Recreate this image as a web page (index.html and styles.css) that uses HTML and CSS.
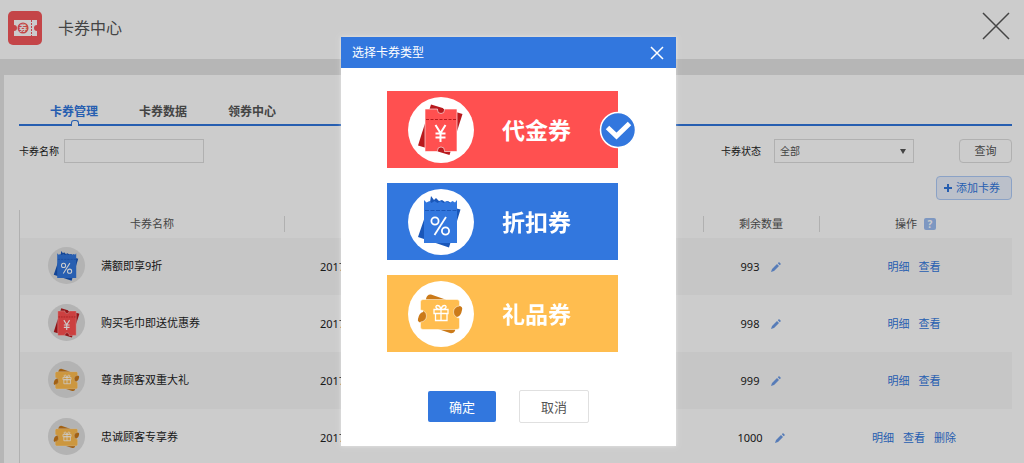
FILE: index.html
```html
<!DOCTYPE html>
<html lang="zh-CN">
<head>
  <meta charset="UTF-8">
  <meta name="viewport" content="width=device-width, initial-scale=1.0">
  <title>卡券中心</title>
  <link rel="stylesheet" href="styles.css">
</head>
<body>
  <svg class="sprite" aria-hidden="true">
    <symbol id="icon-cash" viewBox="0 0 66 66">
      <path fill="#b8191d" d="M23 7.500l31.500 9.500L41.500 58 10 48.500z"/>
      <path fill="#ff5050" stroke="#fff" stroke-width=".6" d="M17 12h12.500v1a3.500 3.500 0 0 0 7 0v-1H49v42.500H36.500v-1a3.500 3.500 0 0 0-7 0v1H17z"/>
      <path fill="#fff" d="M35 10.500l3 1v.500h-2.500z"/>
      <path stroke="#b8191d" stroke-width="1" stroke-dasharray="3 1.500" d="M18 22.500h31"/>
      <path fill="none" stroke="#fff" stroke-width="2" d="M27.500 28l5 8 5-8M32.500 36v9M27.500 36.500h10M27.500 40.500h10"/>
    </symbol>
    <symbol id="icon-discount" viewBox="0 0 66 66">
      <path fill="#1a57b9" d="M22 13l1-6 3 4 2-2 3 3 3-1 3 2 3-1 3 2v4l9.500 2.500L41 58.500 10 48z"/>
      <path fill="#3277de" d="M16 11l2.500 2.500 3-1.500 2 2 3-2 3 2 3-2 3 2 3-2 3 2 3-2 2.500 1.500 2-2.500V54H16z"/>
      <path stroke="#1a57b9" stroke-width="1" stroke-dasharray="4 1.500" d="M17 21.500h32"/>
      <g fill="none" stroke="#fff" stroke-width="1.800">
        <circle cx="27" cy="32" r="3.600"/>
        <circle cx="37.500" cy="42" r="3.600"/>
        <path d="M38 28L26.500 46"/>
      </g>
    </symbol>
    <symbol id="icon-gift" viewBox="0 0 66 66">
      <path fill="#cb7a19" d="M18 18q1-5 5-4.500L36 18l16 7q3 1 2 4-1 6-5 7l-2 14q-2 3-5 2l-12-4-16-6q-5-1-4-4 1-6 5-7z"/>
      <path fill="#ffbd4f" stroke="#fff" stroke-width=".5" d="M15 18.500h34q2.500 0 2.500 2.500v4a6 6 0 0 0 0 12v9q0 2.500-2.500 2.500H15q-2.500 0-2.500-2.500v-5a6 6 0 0 0 0-12v-8q0-2.500 2.500-2.500z"/>
      <path fill="none" stroke="#fff" stroke-width="1.300" d="M26 28.500h14v4H26zM27.500 32.500h11.500v7H27.500zM33 28.500v11M33 28.500c-6 0-6-4-3.500-4s3 2 3.500 4c.5-2 1-4 3.500-4s2.500 4-3.500 4"/>
    </symbol>
    <symbol id="icon-pencil" viewBox="0 0 10 10">
      <path fill="#6d9be6" d="M0 10l1-3 5-5 2 2-5 5zM6.800 1.300L8 0l2 2-1.300 1.200z"/>
    </symbol>
  </svg>

  <header class="top-bar">
    <svg class="logo" viewBox="0 0 34 34" aria-hidden="true">
      <rect width="34" height="34" rx="5" fill="#f6575a"/>
      <path fill="#fff" d="M6 9h23v5a3 3 0 0 0 0 6v5H6v-5a3 3 0 0 0 0-6z"/>
      <circle cx="15" cy="17" r="5.500" fill="#f6575a"/>
      <text class="logo-text" x="15" y="20" text-anchor="middle">券</text>
      <path stroke="#f6575a" stroke-dasharray="2 1" d="M23.500 9v16"/>
    </svg>
    <h1>卡券中心</h1>
    <button class="page-close" type="button" aria-label="关闭">
      <svg viewBox="0 0 28 28"><path d="M1 1l26 26M27 1L1 27"/></svg>
    </button>
  </header>

  <main class="panel">
    <nav class="tabs">
      <a class="active" href="#">卡券管理</a>
      <a href="#">卡券数据</a>
      <a href="#">领券中心</a>
    </nav>

    <form class="filters">
      <label for="card-name">卡券名称</label>
      <input type="text" id="card-name">
      <label class="state-label" for="card-state">卡券状态</label>
      <div class="select-wrap">
        <select id="card-state">
          <option>全部</option>
        </select>
      </div>
      <button class="search" type="button">查询</button>
    </form>

    <div class="actions">
      <button class="add" type="button"><svg viewBox="0 0 8 8" aria-hidden="true"><path d="M4 0v8M0 4h8"/></svg>添加卡券</button>
    </div>

    <table class="cards">
      <thead>
        <tr>
          <th class="col-name">卡券名称</th>
          <th></th>
          <th class="col-left">剩余数量</th>
          <th class="col-ops">操作 <span class="help">?</span></th>
        </tr>
      </thead>
      <tbody>
        <tr>
          <td><div class="name"><span class="thumb"><svg><use href="#icon-discount"/></svg></span>满额即享9折</div></td>
          <td class="date">2017</td>
          <td><div class="count">993<svg><use href="#icon-pencil"/></svg></div></td>
          <td><div class="ops"><a href="#">明细</a><a href="#">查看</a></div></td>
        </tr>
        <tr>
          <td><div class="name"><span class="thumb"><svg><use href="#icon-cash"/></svg></span>购买毛巾即送优惠券</div></td>
          <td class="date">2017</td>
          <td><div class="count">998<svg><use href="#icon-pencil"/></svg></div></td>
          <td><div class="ops"><a href="#">明细</a><a href="#">查看</a></div></td>
        </tr>
        <tr>
          <td><div class="name"><span class="thumb"><svg><use href="#icon-gift"/></svg></span>尊贵顾客双重大礼</div></td>
          <td class="date">2017</td>
          <td><div class="count">999<svg><use href="#icon-pencil"/></svg></div></td>
          <td><div class="ops"><a href="#">明细</a><a href="#">查看</a></div></td>
        </tr>
        <tr>
          <td><div class="name"><span class="thumb"><svg><use href="#icon-gift"/></svg></span>忠诚顾客专享券</div></td>
          <td class="date">2017</td>
          <td><div class="count">1000<svg><use href="#icon-pencil"/></svg></div></td>
          <td><div class="ops"><a href="#">明细</a><a href="#">查看</a><a href="#">删除</a></div></td>
        </tr>
      </tbody>
    </table>
  </main>

  <div class="overlay">
    <div class="modal" role="dialog" aria-labelledby="modal-title">
      <div class="modal-head">
        <h2 id="modal-title">选择卡券类型</h2>
        <button class="modal-close" type="button" aria-label="关闭">
          <svg viewBox="0 0 14 14"><path d="M1 1l12 12M13 1L1 13"/></svg>
        </button>
      </div>
      <form class="modal-body">
        <div class="types">
          <label class="type type-cash">
            <input type="radio" name="type" checked>
            <span class="round"><svg><use href="#icon-cash"/></svg></span>
            代金券
            <svg class="check" viewBox="0 0 36 36" aria-hidden="true">
              <circle cx="18" cy="18" r="17.500" fill="#3277de" stroke="#fff" stroke-width="1.500"/>
              <path d="M7.500 15.500l9 8.500L29.500 11.500"/>
            </svg>
          </label>
          <label class="type type-discount">
            <input type="radio" name="type">
            <span class="round"><svg><use href="#icon-discount"/></svg></span>
            折扣券
            <svg class="check" viewBox="0 0 36 36" aria-hidden="true">
              <circle cx="18" cy="18" r="17.500" fill="#3277de" stroke="#fff" stroke-width="1.500"/>
              <path d="M7.500 15.500l9 8.500L29.500 11.500"/>
            </svg>
          </label>
          <label class="type type-gift">
            <input type="radio" name="type">
            <span class="round"><svg><use href="#icon-gift"/></svg></span>
            礼品券
            <svg class="check" viewBox="0 0 36 36" aria-hidden="true">
              <circle cx="18" cy="18" r="17.500" fill="#3277de" stroke="#fff" stroke-width="1.500"/>
              <path d="M7.500 15.500l9 8.500L29.500 11.500"/>
            </svg>
          </label>
        </div>
        <div class="modal-buttons">
          <button class="ok" type="button">确定</button>
          <button class="cancel" type="button">取消</button>
        </div>
      </form>
    </div>
  </div>
</body>
</html>
```
FILE: styles.css
```css
* {
  box-sizing: border-box;
}
body {
  margin: 0;
  overflow: hidden;
  background: #e4e4e4;
  color: #222;
  font: 11px/16px "Noto Sans", "Noto Sans CJK SC", sans-serif;
}
button, input, select {
  font: inherit;
  color: inherit;
}
button {
  padding: 0;
  cursor: pointer;
}
svg {
  display: block;
}
a {
  color: #3076dd;
  text-decoration: none;
}
.sprite {
  display: none;
}

/* top bar */
.top-bar {
  display: flex;
  align-items: center;
  height: 59px;
  padding: 0 14px 4px 8px;
  background: #fff;
}
.logo {
  width: 34px;
  height: 34px;
}
.logo-text {
  font-size: 8px;
  font-weight: bold;
  fill: #fff;
}
.top-bar h1 {
  margin: 0 auto 0 16px;
  color: #555;
  font-size: 16px;
  font-weight: normal;
  line-height: 24px;
}
.page-close {
  margin-bottom: 4px;
  border: 0;
  background: none;
}
.page-close svg {
  width: 28px;
  height: 28px;
  stroke: #555;
  stroke-width: 1.5;
}

/* panel */
.panel {
  margin: 16px 0 0 4px;
  padding: 24px 12px 0 15px;
  background: #fff;
}
.tabs {
  display: flex;
  gap: 41px;
  padding-left: 31px;
  border-bottom: 2px solid #3076dd;
}
.tabs a {
  position: relative;
  height: 25px;
  color: #555;
  font-size: 12px;
  font-weight: bold;
  line-height: 26px;
}
.tabs .active {
  color: #3076dd;
}
.tabs .active::after {
  content: "";
  position: absolute;
  left: 50%;
  bottom: -2px;
  width: 6px;
  height: 5px;
  margin-left: -3px;
  border: 1px solid #3076dd;
  border-bottom: 0;
  border-radius: 3px 3px 0 0;
  background: #fff;
}
.filters {
  display: flex;
  align-items: center;
  padding-top: 13px;
  font-size: 10px;
}
.filters input, .filters select {
  display: block;
  width: 140px;
  height: 24px;
  padding: 0 5px;
  border: 1px solid #ddd;
  border-radius: 0;
  background: #fff;
  color: #555;
}
.filters input {
  margin-left: 5px;
}
.state-label {
  margin: 0 13px 0 auto;
}
.select-wrap {
  position: relative;
}
.filters select {
  appearance: none;
}
.select-wrap::after {
  content: "";
  position: absolute;
  top: 10px;
  right: 8px;
  border: 3px solid transparent;
  border-top: 5px solid #555;
  border-bottom: 0;
  pointer-events: none;
}
.search {
  width: 53px;
  height: 24px;
  margin-left: 45px;
  border: 1px solid #ddd;
  border-radius: 4px;
  background: #fff;
  color: #555;
  font-size: 11px;
}
.actions {
  display: flex;
  justify-content: flex-end;
  padding: 13px 0 10px;
}
.add {
  display: flex;
  align-items: center;
  gap: 4px;
  height: 24px;
  padding: 0 11px 0 7px;
  border: 1px solid #aecbf8;
  border-radius: 4px;
  background: #eaf1fd;
  color: #3076dd;
}
.add svg {
  width: 8px;
  height: 8px;
  stroke: #3076dd;
  stroke-width: 2;
}

/* card table */
.cards {
  width: 100%;
  border-collapse: separate;
  border-spacing: 0;
  border-left: 1px solid #ddd;
  table-layout: fixed;
}
.cards th {
  position: relative;
  height: 28px;
  padding: 0;
  color: #555;
  font-weight: normal;
}
.cards th + th::before {
  content: "";
  position: absolute;
  left: 0;
  top: 6px;
  height: 16px;
  border-left: 1px solid #ddd;
}
.col-name {
  width: 264px;
}
.col-left {
  width: 116px;
}
.col-ops {
  width: 193px;
}
.help {
  display: inline-block;
  width: 12px;
  margin-left: 4px;
  border-radius: 2px;
  background: #9dbdf2;
  color: #fff;
  font-size: 10px;
  font-weight: bold;
  line-height: 12px;
}
.cards td {
  height: 57px;
  padding: 0;
}
.cards tbody tr:nth-child(odd) {
  background: #f8f8f8;
}
.name {
  display: flex;
  align-items: center;
  gap: 16px;
  padding: 0 0 2px 28px;
}
.thumb {
  display: flex;
  align-items: center;
  justify-content: center;
  width: 37px;
  height: 37px;
  border-radius: 50%;
  background: #e0e0e0;
}
.thumb svg {
  width: 38px;
  height: 38px;
  flex: none;
}
.cards .date {
  padding-left: 36px;
}
.count, .ops {
  display: flex;
  align-items: center;
  justify-content: center;
}
.count {
  gap: 12px;
}
.count svg {
  width: 10px;
  height: 10px;
}
.ops {
  gap: 9px;
  padding-right: 3px;
}

/* dialog */
.overlay {
  position: fixed;
  inset: 0;
  display: flex;
  justify-content: center;
  align-items: flex-start;
  padding: 37px 7px 0 0;
  background: rgba(0, 0, 0, 0.2);
}
.modal {
  width: 335px;
  background: #fff;
  box-shadow: 0 0 4px rgba(255, 255, 255, 0.5);
}
.modal-head {
  display: flex;
  align-items: center;
  justify-content: space-between;
  height: 31px;
  padding: 0 12px 0 11px;
  background: #3277de;
  color: #fff;
}
.modal-head h2 {
  margin: 0;
  font-size: 12px;
  font-weight: normal;
}
.modal-close {
  border: 0;
  background: none;
}
.modal-close svg {
  width: 14px;
  height: 14px;
  stroke: #fff;
  stroke-width: 1.5;
}
.modal-body {
  padding: 23px 0;
}
.types {
  display: grid;
  gap: 15px;
  margin: 0 58px 0 46px;
}
.type {
  position: relative;
  display: flex;
  align-items: center;
  gap: 28px;
  height: 77px;
  padding-left: 21px;
  color: #fff;
  font-size: 23px;
  font-weight: bold;
  line-height: 32px;
  cursor: pointer;
}
.type input {
  position: absolute;
  opacity: 0;
}
.type-cash {
  background: #ff5050;
}
.type-discount {
  background: #3277de;
}
.type-gift {
  background: #ffbd4f;
}
.round {
  width: 66px;
  height: 66px;
  border-radius: 50%;
  background: #fff;
}
.round svg {
  width: 66px;
  height: 66px;
}
.check {
  position: absolute;
  top: 21px;
  right: -18px;
  width: 36px;
  height: 36px;
  display: none;
  overflow: visible;
}
.check path {
  fill: none;
  stroke: #fff;
  stroke-width: 5;
}
.type input:checked ~ .check {
  display: block;
}
.modal-buttons {
  display: flex;
  align-items: center;
  justify-content: center;
  gap: 23px;
  padding-top: 38px;
}
.modal-buttons button {
  font-size: 13px;
  border-radius: 2px;
}
.ok {
  width: 68px;
  height: 31px;
  border: 0;
  background: #3277de;
  color: #fff;
}
.cancel {
  width: 70px;
  height: 33px;
  border: 1px solid #e0e0e0;
  background: #fff;
  color: #555;
}
```
